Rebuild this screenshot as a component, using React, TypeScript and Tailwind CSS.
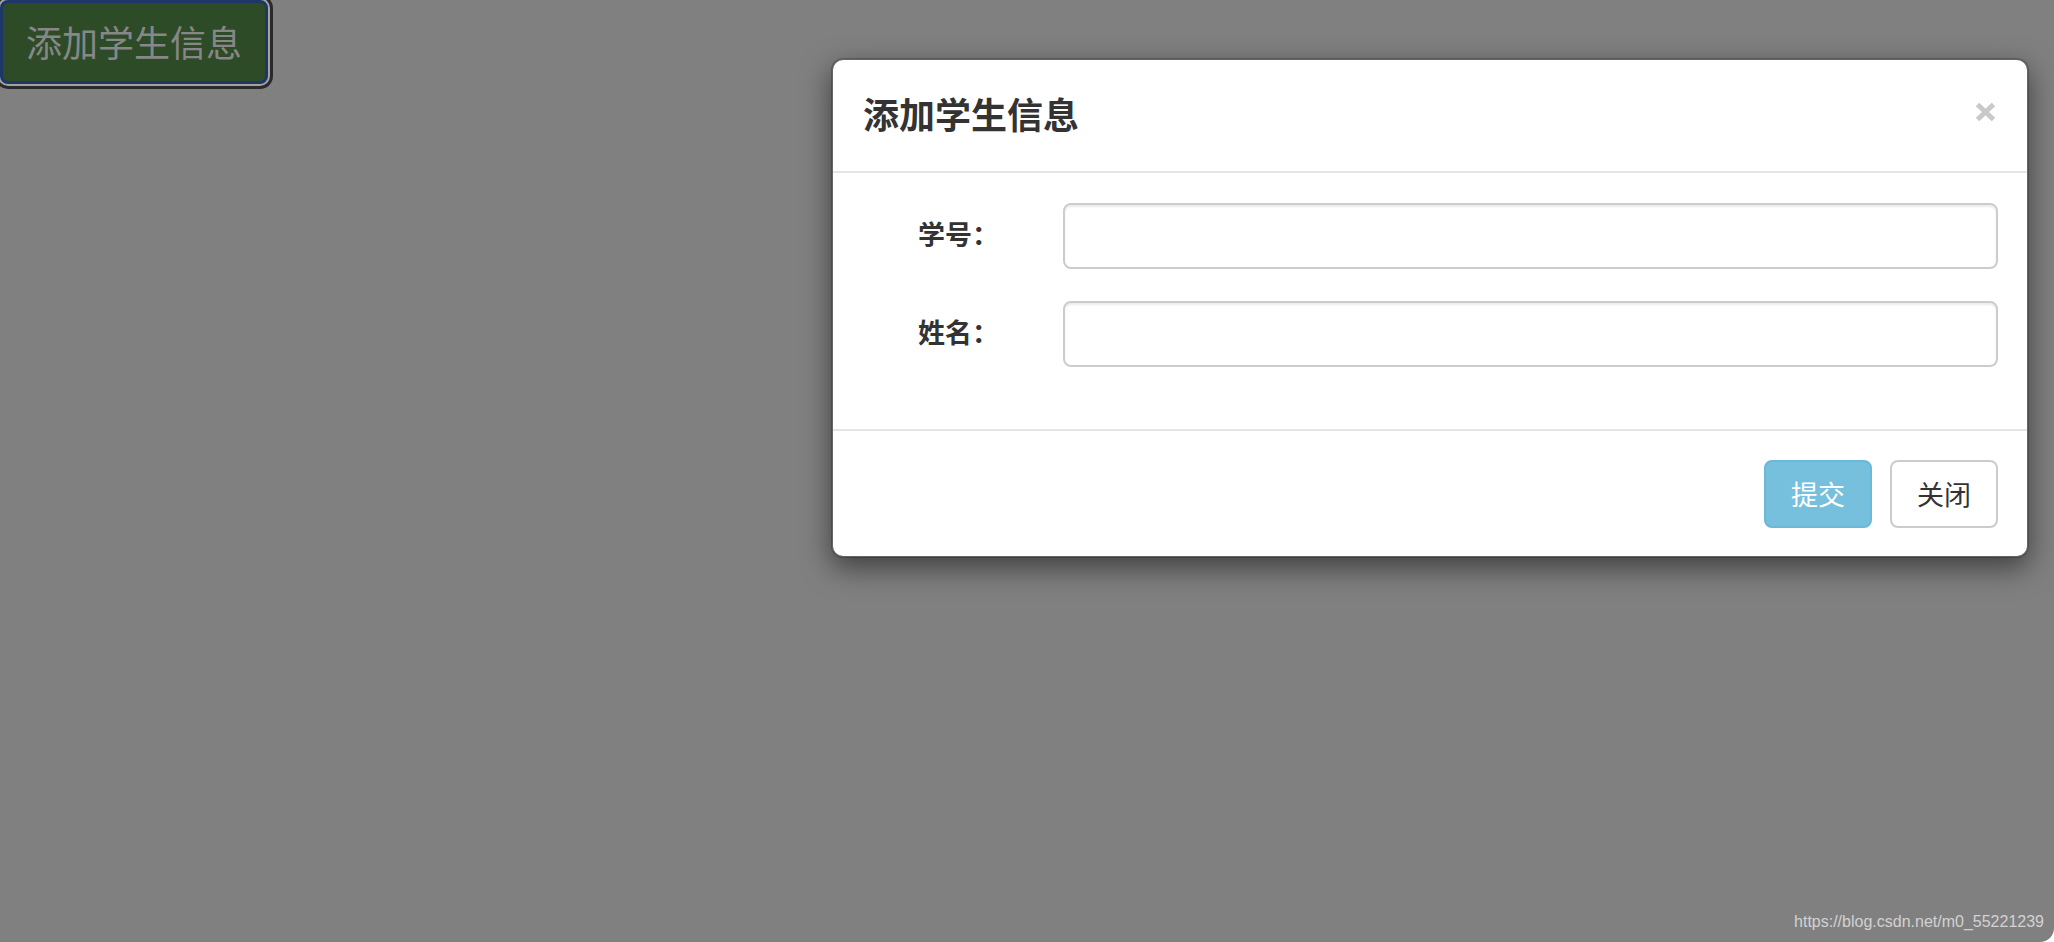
import React from "react"

const fields = [
  { label: "学号：", name: "sno" },
  { label: "姓名：", name: "sname" },
]

function CloseIcon() {
  return (
    <svg width="21" height="20" viewBox="0 0 21 20" className="block">
      <path d="M2.5 2.5 L18.5 17.5 M18.5 2.5 L2.5 17.5" stroke="#c9c9c9" strokeWidth="5" fill="none" />
    </svg>
  )
}

export default function App() {
  return (
    <div className="relative h-[942px] w-full overflow-hidden rounded-br-[14px] bg-[#808080] font-['Noto_Sans_CJK_SC','Noto_Sans',sans-serif]">
      {/* page button, dimmed by the backdrop */}
      <button className="flex h-[84px] w-[268px] items-center justify-center rounded-[8px] border-[3px] border-[#1c3768] bg-[#2e4b28] pb-[2px] text-[36px] leading-none text-[#878787] shadow-[0_0_0_2px_#a2a2a2,0_0_0_5px_#2a2a2a]">
        添加学生信息
      </button>

      {/* modal dialog */}
      <div className="absolute left-[831px] top-[58px] w-[1198px] rounded-[12px] border-2 border-black/20 bg-white bg-clip-padding shadow-[0_10px_29px_rgba(0,0,0,0.5)]">
        <div className="flex h-[113px] items-center justify-between border-b-2 border-[#e5e5e5] pl-[30px] pr-[31px]">
          <h4 className="mb-[5px] text-[36px] font-bold leading-[52px] text-[#333333]">添加学生信息</h4>
          <button className="-mt-2">
            <CloseIcon />
          </button>
        </div>

        <div className="flex flex-col gap-[32px] pb-[62px] pl-[30px] pr-[29px] pt-[30px]">
          {fields.map((f) => (
            <div key={f.name} className="flex items-center">
              <label className="w-[200px] shrink-0 pb-[5px] pl-[55px] text-[27px] font-bold leading-none text-[#333333]">
                {f.label}
              </label>
              <input
                name={f.name}
                className="h-[66px] flex-1 rounded-[8px] border-2 border-[#cccccc] bg-white px-[23px] text-[27px] shadow-[inset_0_2px_2px_rgba(0,0,0,0.075)] outline-none"
              />
            </div>
          ))}
        </div>

        <div className="flex justify-end gap-[18px] border-t-2 border-[#e5e5e5] pb-[28px] pl-[30px] pr-[29px] pt-[29px]">
          <button className="flex h-[68px] w-[108px] items-center justify-center rounded-[8px] border-2 border-[#6cb8d8] bg-[#76bfdd] pb-[2px] text-[27px] leading-none text-white">
            提交
          </button>
          <button className="flex h-[68px] w-[108px] items-center justify-center rounded-[8px] border-2 border-[#cccccc] bg-white pb-[2px] text-[27px] leading-none text-[#333333]">
            关闭
          </button>
        </div>
      </div>

      {/* watermark */}
      <div className="absolute bottom-[12px] right-[10px] font-['Liberation_Sans',Arial,sans-serif] text-[16px] leading-none text-[#d2d2d2]">
        https://blog.csdn.net/m0_55221239
      </div>
    </div>
  )
}
